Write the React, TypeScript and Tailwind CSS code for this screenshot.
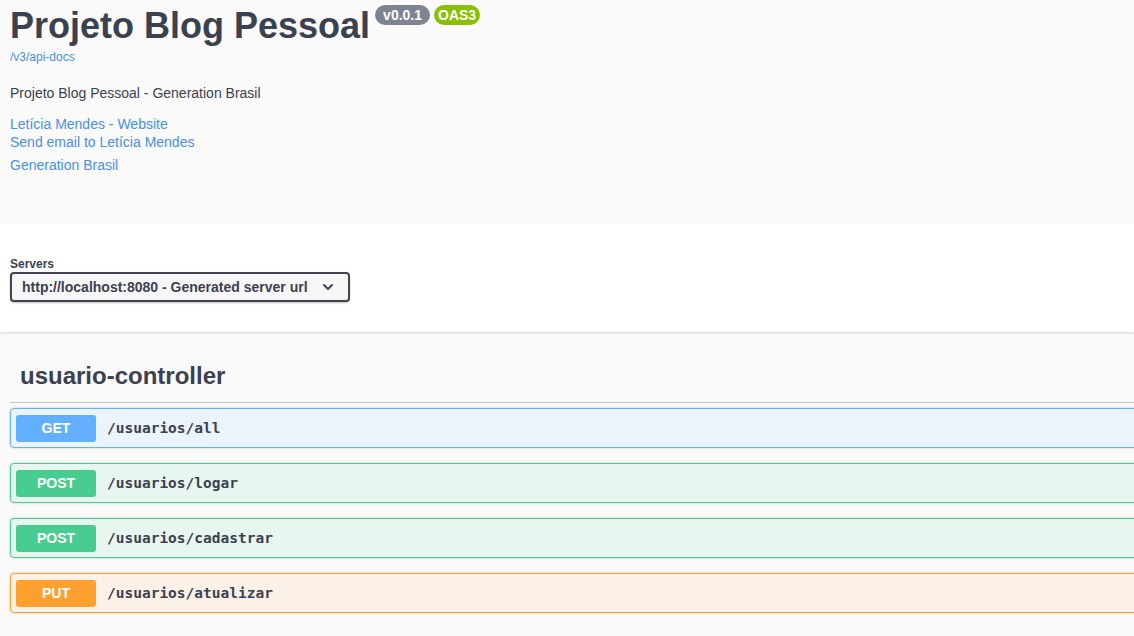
const ops = [
  { method: "GET", path: "/usuarios/all", box: "bg-[#ebf3fb] border-[#61affe]", badge: "bg-[#61affe]" },
  { method: "POST", path: "/usuarios/logar", box: "bg-[#e8f6f0] border-[#49cc90]", badge: "bg-[#49cc90]" },
  { method: "POST", path: "/usuarios/cadastrar", box: "bg-[#e8f6f0] border-[#49cc90]", badge: "bg-[#49cc90]" },
  { method: "PUT", path: "/usuarios/atualizar", box: "bg-[#fbf1e6] border-[#fca130]", badge: "bg-[#fca130]" },
];

const App = () => {
  return (
    <div className="min-h-screen w-full overflow-hidden bg-[#fafafa] font-['Liberation_Sans',Arial,sans-serif] text-[#3b4151]">
      {/* info */}
      <div className="h-[223px] px-[10px] pt-[5px]">
        <div className="flex items-start">
          <h2 className="text-[36px] font-bold leading-[41px] text-[#3b4151]">Projeto Blog Pessoal</h2>
          <span className="ml-[5px] h-[20px] rounded-full bg-[#7d8492] px-[8px] text-[14px] font-bold leading-[20px] text-white">
            v0.0.1
          </span>
          <span className="ml-[4px] h-[20px] rounded-full bg-[#89bf04] px-[4px] text-[14px] font-bold leading-[20px] text-white">
            OAS3
          </span>
        </div>
        <a className="mt-[3px] block text-[12px] leading-[16px] text-[#4990e2]">/v3/api-docs</a>
        <p className="mt-[19px] text-[14px] leading-[18px]">Projeto Blog Pessoal - Generation Brasil</p>
        <div className="mt-[13px] text-[14px] leading-[18px] text-[#4990e2]">
          <a className="block">Letícia Mendes - Website</a>
          <a className="block">Send email to Letícia Mendes</a>
          <a className="mt-[5px] block">Generation Brasil</a>
        </div>
      </div>

      {/* servers */}
      <div className="h-[109px] bg-white px-[10px] pt-[34px] shadow-[0_1px_2px_0_rgba(0,0,0,0.15)]">
        <div className="text-[12px] font-bold leading-[14px]">Servers</div>
        <div className="mt-[1px] flex h-[30px] w-[340px] items-center justify-between rounded-[4px] border-2 border-[#41444e] bg-[#f7f7f7] pl-[10px] pr-[14px] shadow-[0_1px_2px_0_rgba(0,0,0,0.25)]">
          <span className="text-[14px] font-bold text-[#3b4151]">http://localhost:8080 - Generated server url</span>
          <svg width="12" height="8" viewBox="0 0 12 8" fill="none">
            <path d="M2 2l4 4 4-4" stroke="#3b4151" strokeWidth="1.8" strokeLinecap="round" strokeLinejoin="round" />
          </svg>
        </div>
      </div>

      {/* tag */}
      <div className="mr-[-20px] pl-[10px] pt-[29px]">
        <h3 className="border-b border-[#c4c5c9] pb-[12px] pl-[10px] text-[24px] font-bold leading-[29px]">
          usuario-controller
        </h3>
        <div className="mt-[5px] flex flex-col gap-[15px]">
          {ops.map((op) => (
            <div
              key={op.path}
              className={`flex h-[40px] items-center rounded-[4px] border px-[5px] shadow-[0_0_3px_rgba(0,0,0,0.19)] ${op.box}`}
            >
              <span
                className={`flex h-[27px] w-[80px] items-center justify-center rounded-[3px] text-[14px] font-bold text-white ${op.badge}`}
              >
                {op.method}
              </span>
              <span className="ml-[11px] pt-[1px] font-['DejaVu_Sans_Mono',monospace] text-[14.5px] font-bold text-[#3b4151]">
                {op.path}
              </span>
            </div>
          ))}
        </div>
      </div>
    </div>
  );
};

export default App;
